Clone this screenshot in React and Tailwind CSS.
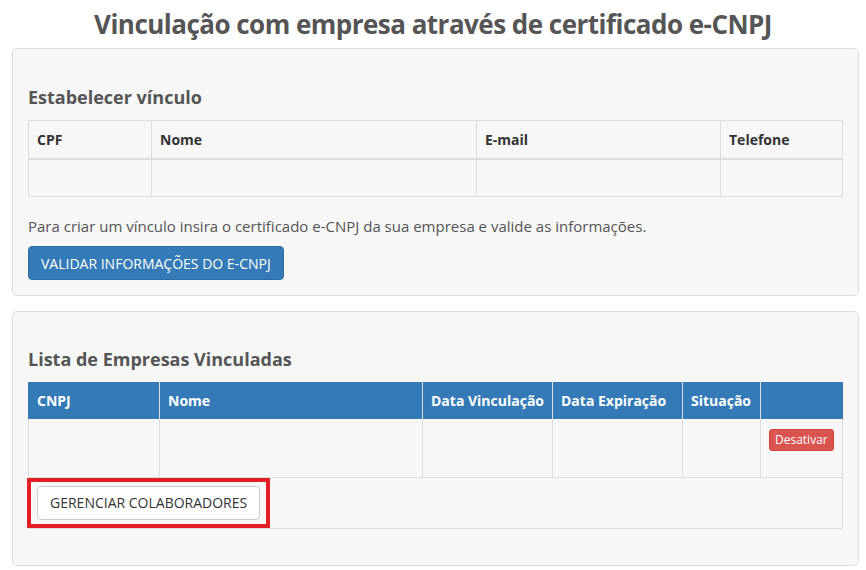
export default function App() {
  const cabecalhoVinculo = [
    { label: "CPF", w: "w-[123px]" },
    { label: "Nome", w: "w-[325px]" },
    { label: "E-mail", w: "w-[244px]" },
    { label: "Telefone", w: "" },
  ]

  const cabecalhoEmpresas = [
    { label: "CNPJ", w: "w-[131px]" },
    { label: "Nome", w: "w-[263px]" },
    { label: "Data Vinculação", w: "w-[130px]" },
    { label: "Data Expiração", w: "w-[130px]" },
    { label: "Situação", w: "w-[78px]" },
    { label: "", w: "" },
  ]

  return (
    <div className="min-h-screen bg-white font-['Open_Sans',sans-serif] text-[#555] pb-2">

      {/* Título */}
      <h1 className="text-center text-[26px] leading-[36px] font-bold text-[#555] pt-[6px] pb-[6px] tracking-[-0.52px]">
        Vinculação com empresa através de certificado e-CNPJ
      </h1>

      {/* Estabelecer vínculo */}
      <div className="ml-[12px] mr-[7px] border border-[#ddd] rounded-[5px] bg-[#f7f7f7] px-[15px] pt-[36px] pb-[15px]">
        <h3 className="text-[18px] leading-[24px] font-bold text-[#555] mb-[11px]">Estabelecer vínculo</h3>

        <table className="w-full border-collapse table-fixed text-[14px]">
          <thead>
            <tr>
              {cabecalhoVinculo.map((c) => (
                <th key={c.label} className={`${c.w} border border-[#ddd] border-b-2 text-left font-bold text-[#333] px-[8px] h-[38px]`}>
                  {c.label}
                </th>
              ))}
            </tr>
          </thead>
          <tbody>
            <tr>
              {cabecalhoVinculo.map((c) => (
                <td key={c.label} className="border border-[#ddd] h-[38px]"></td>
              ))}
            </tr>
          </tbody>
        </table>

        <p className="text-[15px] leading-[20px] text-[#555] mt-[19px]">
          Para criar um vínculo insira o certificado e-CNPJ da sua empresa e valide as informações.
        </p>

        <button className="mt-[10px] h-[34px] px-[12px] bg-[#337ab7] border border-[#2e6da4] rounded-[4px] text-white text-[14px] uppercase">
          Validar informações do e-CNPJ
        </button>
      </div>

      {/* Lista de empresas */}
      <div className="ml-[12px] mr-[7px] mt-[15px] border border-[#ddd] rounded-[5px] bg-[#f7f7f7] px-[15px] pt-[35px] pb-[36px]">
        <h3 className="text-[18px] leading-[24px] font-bold text-[#555] mb-[11px]">Lista de Empresas Vinculadas</h3>

        <table className="w-full border-collapse table-fixed text-[14px]">
          <thead>
            <tr className="bg-[#337ab7]">
              {cabecalhoEmpresas.map((c, i) => (
                <th key={i} className={`${c.w} border-x border-[#ddd] first:border-l-[#337ab7] last:border-r-[#337ab7] text-left font-bold text-white px-[8px] h-[37px] whitespace-nowrap`}>
                  {c.label}
                </th>
              ))}
            </tr>
          </thead>
          <tbody>
            <tr>
              {cabecalhoEmpresas.map((c, i) => (
                <td key={i} className="border border-[#ddd] border-t-0 h-[58px] align-top px-[8px] pt-[9px]">
                  {i === 5 && (
                    <button className="h-[22px] px-[5px] bg-[#d9534f] border border-[#d43f3a] rounded-[3px] text-white text-[12px] leading-[18px]">
                      Desativar
                    </button>
                  )}
                </td>
              ))}
            </tr>
            <tr>
              <td colSpan={6} className="border border-[#ddd] p-0 h-[51px]">
                <div className="inline-block -ml-[2px] border-4 border-[#e31e24] px-[6px] py-[4px]">
                  <button className="h-[34px] px-[12px] bg-white border border-[#ccc] rounded-[4px] text-[#333] text-[14px] uppercase">
                    Gerenciar colaboradores
                  </button>
                </div>
              </td>
            </tr>
          </tbody>
        </table>
      </div>

    </div>
  )
}
